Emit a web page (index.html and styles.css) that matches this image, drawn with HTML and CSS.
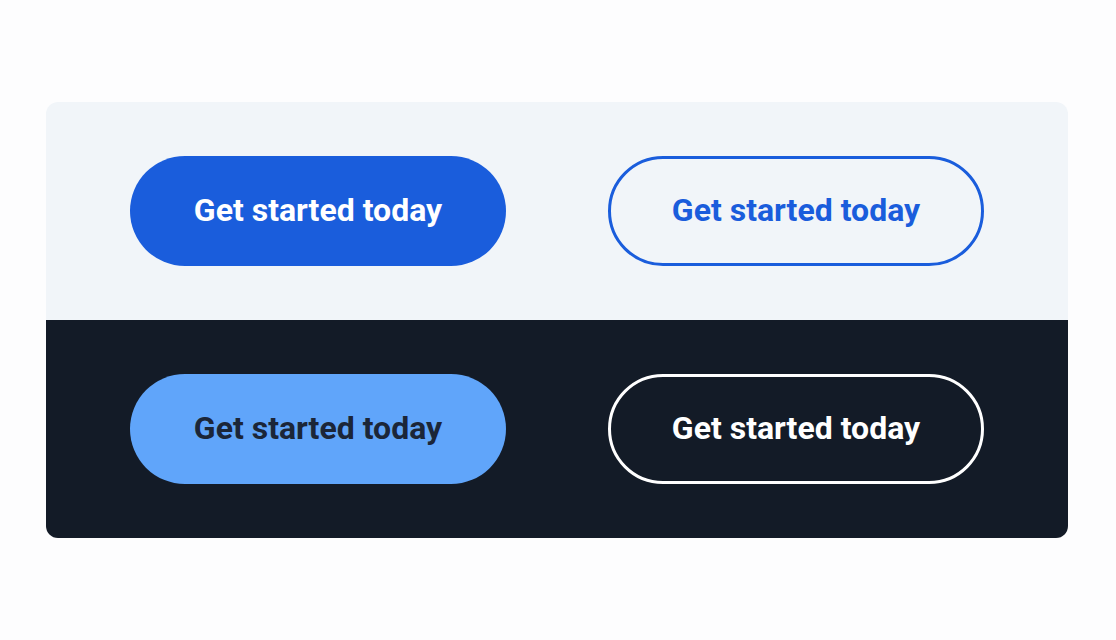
FILE: index.html
```html
<!DOCTYPE html>
<html>
<head>
  <link rel="stylesheet" href="styles.css">
</head>
<body>
  <div class="card">
    <div class="row row-light">
      <a href="#" class="btn btn-solid">Get started today</a>
      <a href="#" class="btn btn-outline">Get started today</a>
    </div>
    <div class="row row-dark">
      <a href="#" class="btn btn-solid-dark">Get started today</a>
      <a href="#" class="btn btn-outline-dark">Get started today</a>
    </div>
  </div>
</body>
</html>
```

FILE: styles.css
```css
body {
  margin: 0;
  background-color: #fdfdfe;
  font-family: Roboto, "Liberation Sans", sans-serif;
}

.card {
  width: 1022px;
  margin: 102px 0 0 46px;
  border-radius: 12px;
  overflow: hidden;
}

.row {
  display: grid;
  grid-template-columns: 376px 376px;
  column-gap: 102px;
  padding: 54px 84px;
}

.row-light {
  background-color: #f1f5f9;
}

.row-dark {
  background-color: #131b27;
}

.btn {
  display: flex;
  align-items: center;
  justify-content: center;
  box-sizing: border-box;
  height: 110px;
  padding-bottom: 3px;
  border-radius: 55px;
  font-size: 32px;
  font-weight: 700;
  text-decoration: none;
}

.btn-solid {
  background-color: #1a5ddc;
  color: #ffffff;
}

.btn-outline {
  border: 3px solid #1a5ddc;
  color: #1a5ddc;
}

.btn-solid-dark {
  background-color: #60a5fa;
  color: #1b2638;
}

.btn-outline-dark {
  border: 3px solid #ffffff;
  color: #ffffff;
}
```
